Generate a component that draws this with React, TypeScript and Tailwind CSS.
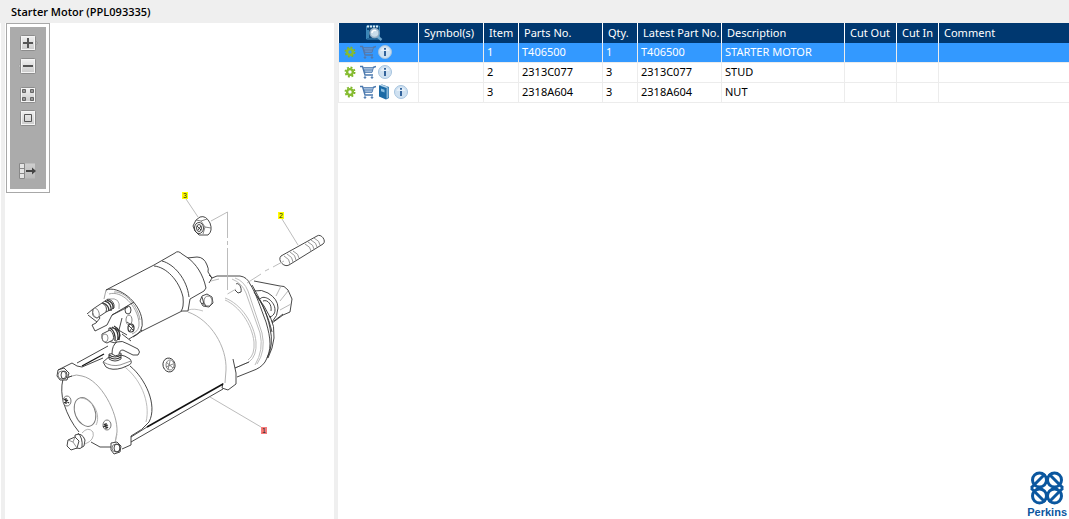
import { ReactNode } from "react";

type Part = {
  item: number;
  partNo: string;
  qty: number;
  description: string;
  hasManual?: boolean;
};

const parts: Part[] = [
  { item: 1, partNo: "T406500", qty: 1, description: "STARTER MOTOR" },
  { item: 2, partNo: "2313C077", qty: 3, description: "STUD" },
  { item: 3, partNo: "2318A604", qty: 3, description: "NUT", hasManual: true },
];

const columns = [
  { title: "Symbol(s)", width: "w-[65px]" },
  { title: "Item", width: "w-[35px]" },
  { title: "Parts No.", width: "w-[84px]" },
  { title: "Qty.", width: "w-[35px]" },
  { title: "Latest Part No.", width: "w-[84px]" },
  { title: "Description", width: "w-[123px]" },
  { title: "Cut Out", width: "w-[52px]" },
  { title: "Cut In", width: "w-[42px]" },
  { title: "Comment", width: "" },
];

function GearIcon() {
  return (
    <svg viewBox="0 0 12 12" className="size-3">
      <circle cx="6" cy="6" r="4.6" fill="none" stroke="#7fb52c" strokeWidth="1.8" strokeDasharray="1.9 1.71" />
      <circle cx="6" cy="6" r="2.9" fill="none" stroke="#86bc2f" strokeWidth="2.4" />
    </svg>
  );
}

function CartIcon({ dim }: { dim?: boolean }) {
  const stroke = dim ? "#5577a8" : "#4a78ae";
  return (
    <svg viewBox="0 0 16 14" className="h-3.5 w-4" fill="none" stroke={stroke}>
      <path d="M3.500 2.500H13.500L12 7.500H5Z" fill={dim ? "#5f9be0" : "#c3d6ec"} strokeWidth=".8" />
      <path d="M6 3V7M8 3V7M10 3V7M12 3V7M4.500 5H13" strokeWidth=".6" />
      <path d="M0 1.500H2.500L5 10H13M13 2.500L16 1.500" strokeWidth="1.400" />
      <circle cx="5" cy="12.500" r=".8" fill={stroke} />
      <circle cx="12" cy="12.500" r=".8" fill={stroke} />
    </svg>
  );
}

function InfoIcon() {
  return (
    <svg viewBox="0 0 14 14" className="size-3.5">
      <circle cx="7" cy="7" r="6.5" fill="#cfe1f1" stroke="#a5c3de" />
      <path d="M2.500 6A4.700 4.700 0 0 1 11.500 6Z" fill="#e6f0f9" />
      <path d="M7 3V4.800M7 6V11" stroke="#33639b" strokeWidth="2" />
    </svg>
  );
}

function BookIcon() {
  return (
    <svg viewBox="0 0 12 16" className="h-4 w-3">
      <path d="M1 1.500L4 .5L11 3V14L8 15.500L1 12.500Z" fill="#1b6aa5" />
      <path d="M1.500 1.500L4 .8L10.500 3L8.500 4Z" fill="#b7d5ea" />
      <path d="M8.500 4.300L10.500 3.300V13.500L8.500 14.800Z" fill="#84b4d6" />
      <path d="M3 4.500L6.500 5.800V8.500L3 7.300Z" fill="#8dc0e2" />
    </svg>
  );
}

function SearchSheetIcon() {
  return (
    <svg viewBox="0 0 17 16" className="h-4 w-[17px]">
      <path d="M.5 1H13.500V14H.5Z" fill="#0d4779" stroke="#3b87ba" />
      <path d="M1 1.500H13" stroke="#d9edf8" strokeWidth="2" strokeDasharray="2 1" />
      <path d="M2 5V13" stroke="#4d9bc9" strokeWidth="1.500" />
      <path d="M11.500 11.500L15.500 15" stroke="#70a9d0" strokeWidth="2.400" />
      <circle cx="8.500" cy="8" r="4.500" fill="#c9dcea" stroke="#93adc3" strokeWidth="1.400" />
      <path d="M6 8A2.700 2.700 0 0 1 10 5.700" fill="none" stroke="#fff" strokeWidth="1.400" />
    </svg>
  );
}

function ToolButton({ label, children }: { label: string; children: ReactNode }) {
  return (
    <button type="button" aria-label={label} title={label} className="block cursor-pointer">
      <svg viewBox="0 0 20 16" className="h-4 w-5">
        <defs>
          <linearGradient id="face" x1="0" y1="0" x2="0" y2="1">
            <stop offset="0" stopColor="#f2f2f2" />
            <stop offset="1" stopColor="#c9c9c9" />
          </linearGradient>
        </defs>
        {children}
      </svg>
    </button>
  );
}

const face = (
  <>
    <rect x="2.500" y=".5" width="15" height="15" rx="1" fill="url(#face)" stroke="#8c8c8c" />
    <rect x="3.500" y="1.500" width="13" height="13" fill="none" stroke="#f5f5f5" />
  </>
);

function Toolbar() {
  return (
    <div className="absolute top-0 left-px border border-[#a8a8a8] bg-white p-[3px]">
      <div className="flex h-[162px] w-9 flex-col items-center bg-[#ababab] pt-2">
        <div className="flex flex-col gap-[7px]">
          <ToolButton label="Zoom in">
            <path d="M17 5.500L19.500 8L17 10.500Z" fill="#d8d8d8" stroke="#888" />
            {face}
            <path d="M5 8H15M10 3V13" stroke="#555" strokeWidth="2" />
          </ToolButton>
          <ToolButton label="Zoom out">
            <path d="M3 5.500L.5 8L3 10.500Z" fill="#e8e8e8" stroke="#999" />
            {face}
            <path d="M5 8H15" stroke="#555" strokeWidth="2" />
          </ToolButton>
        </div>
        <div className="mt-[13px] flex flex-col gap-[7px]">
          <ToolButton label="Fit to window">
            {face}
            <path d="M4.500 2.500h3v3h-3zM12.500 2.500h3v3h-3zM4.500 10.500h3v3h-3zM12.500 10.500h3v3h-3z" fill="#999" stroke="#666" />
          </ToolButton>
          <ToolButton label="Actual size">
            {face}
            <path d="M6.500 4.500h7v7h-7z" fill="none" stroke="#555" />
          </ToolButton>
        </div>
        <div className="mt-[37px]">
          <ToolButton label="Hide list">
            <path d="M7 .5H17V15.500H7Z" fill="url(#face)" opacity=".5" />
            <path d="M1.500 .5h5v15h-5zM1.500 5.500h5M1.500 10.500h5" fill="#e5e5e5" stroke="#888" />
            <path d="M8 8H15" stroke="#444" strokeWidth="2" />
            <path d="M14 4.500L18 8L14 11.500Z" fill="#444" />
          </ToolButton>
        </div>
      </div>
    </div>
  );
}

function Hotspot({ x, y, label, fill }: { x: number; y: number; label: string; fill: string }) {
  return (
    <g>
      <rect x={x} y={y} width="6" height="7" fill={fill} />
      <text x={x + 3} y={y + 6} fontSize="7" textAnchor="middle" fill="#222" fontFamily="Liberation Sans, sans-serif">
        {label}
      </text>
    </g>
  );
}

function StarterDrawing() {
  return (
    <svg
      viewBox="5 23 329 496"
      preserveAspectRatio="xMinYMin meet"
      className="w-full"
      role="img"
      aria-label="Starter motor exploded view"
      fill="none"
      stroke="#333"
      strokeWidth=".9"
      strokeLinejoin="round"
    >
      {/* flange nut */}
      <path d="M200 217Q206 215 210 223Q213 231 208 235L199 235L195 231L193 226L196 220Z" fill="#fff" />
      <path d="M196 220L201 221L207 219M201 221L205 227L203 234M205 227L211 228" stroke="#777" />
      <ellipse cx="199" cy="228" rx="4.500" ry="5.500" />
      <ellipse cx="199" cy="228" rx="2.500" ry="3.500" />
      <path d="M197 226L201 230M198 230L201 226" />

      {/* stud */}
      <path d="M281 256L317 236C321 233 327 241 323 244L289 265C284 268 277 260 281 256Z" fill="#fff" />
      <g stroke="#8c8c8c">
        <path d="M284 256Q290 259 290 264M287 254Q293 257 293 262M290 252Q296 255 296 260M293 251Q299 254 299 258" />
        <path d="M305 244Q311 247 311 251M308 242Q314 245 314 249M311 240Q317 243 317 247M314 238Q320 241 320 245" />
      </g>

      {/* drive end nose and pinion */}
      <path d="M254 281L280 286Q284 285 288 290L292 299L290 312L283 315L272 323" fill="#fff" />
      <path d="M281 286L276 296M288 291L280 301M291 304L280 310" stroke="#b0b0b0" />
      <path d="M254 291Q262 289 268 293Q278 299 278 308Q278 316 272 322" fill="#fff" />
      <path d="M260 299C264 294 275 301 275 310C275 314 272 317 269 317M263 301C268 299 272 305 271 311M274 321L283 314" />
      <path d="M256 295Q265 306 270 317M270 316Q275 326 274 338Q273 348 268 358" />

      {/* mounting flange */}
      <path
        d="M209 275L212 278L217 276H240Q247 277 250 284C256 293 261 309 266 322C271 339 272 350 265 362Q261 368 252 371L237 377"
        fill="#fff"
      />
      <path d="M252 285C260 299 267 313 270 328Q274 345 267 358M254 292C263 304 268 316 272 332" />
      <g stroke="#b4b4b4">
        <path d="M211 281L219 279M235 278Q244 281 248 291L262 333Q266 351 257 364M232 279Q242 283 246 293L260 333Q264 350 255 365" />
        <path d="M225 298C241 304 254 323 256 342Q257 356 249 362L235 368M225 300C239 306 252 324 254 342Q255 355 248 360" />
      </g>
      <path d="M236 284C239 282 242 288 241 292L238 293L235 290M235 368L249 362" />

      {/* main housing */}
      <path d="M188 312C211 320 227 347 226 370L225 383" stroke="#a8a8a8" />
      <path d="M188 310Q194 308 203 311" stroke="#bcbcbc" />
      <path d="M233 359L236 373V384L228 390L222 388L223 383" />
      <path d="M147 427L200 397L223 384" stroke="#111" strokeWidth="1.500" />
      <path d="M131 437L147 427M131 442L223 389" />
      <ellipse cx="169" cy="365" rx="6" ry="7" transform="rotate(-15 169 365)" />
      <ellipse cx="170" cy="365" rx="4" ry="5" stroke="#777" />
      <path d="M166 362L173 368M170 361L168 370M166 367L173 364" stroke="#777" />
      <path d="M202 296L207 294L212 297L213 303L209 307L203 306L200 301Z" fill="#fff" />
      <ellipse cx="208" cy="301" rx="4" ry="5" stroke="#777" />
      <path d="M202 297L204 304M202 303L206 306" />

      {/* solenoid body */}
      <path
        d="M187 258L197 257Q204 257 207 265Q209 269 208 272L212 278L209 283"
      />
      <path
        d="M106 290L154 265L175 253Q178 250 182 254L188 258C196 264 203 274 206 288L204 291L190 299L188 311H182L142 331Z"
        fill="#fff"
      />
      <path d="M154 266C166 267 179 280 183 297Q184 308 181 311M162 261C174 264 187 279 189 297" />
      <path d="M106 290C118 285 140 302 142 320Q144 332 133 337" fill="#fff" />
      <g stroke="#999">
        <path d="M109 294C122 290 137 306 139 322Q140 331 132 334M114 292C125 291 138 306 140 320" />
        <path d="M109 299Q121 297 119 309M106 290L104 299" />
      </g>
      {/* terminal block */}
      <path d="M87 314L93 309L100 318L96 323L92 325L95 331L107 325L112 315L128 307" />
      <path d="M88 315L97 322M112 315L134 302M115 328L127 335M127 322L134 327M122 318L119 330" />
      <path d="M102 303L108 299Q115 301 114 308L106 312Z" fill="#fff" />
      <path d="M105 301Q112 303 111 311M107 300Q114 302 113 309M103 303Q109 305 109 311" strokeWidth="1.300" />
      <path d="M93 309L102 303Q108 306 106 312L97 318Q91 317 93 309Z" fill="#fff" />
      <ellipse cx="96" cy="313" rx="3" ry="5" transform="rotate(-20 96 313)" stroke="#888" />
      <ellipse cx="128" cy="310" rx="3" ry="4" />
      <ellipse cx="129" cy="320" rx="3" ry="5" stroke="#777" />
      <ellipse cx="131" cy="328" rx="3" ry="4" strokeWidth="1.200" />
      <path d="M129 326L133 330M133 326L130 331" />
      <path d="M109 328Q119 327 120 336L115 343L108 341Z" fill="#fff" />
      <path d="M112 327Q119 330 118 340M114 326Q122 330 119 340M110 328Q116 332 115 341" strokeWidth="1.300" />
      <path d="M102 334L110 330Q115 335 113 340L107 343Q101 342 102 334Z" fill="#fff" />
      <ellipse cx="105" cy="338" rx="3" ry="4" stroke="#888" />
      <path d="M122 334L131 341M129 339L142 331" />

      {/* end cap */}
      <path d="M58 370L72 363L77 366L82 367L103 358M77 363L108 346" />
      <path d="M82 366L104 354" stroke="#111" strokeWidth="1.300" />
      <path d="M63 379L72 376Q76 374 82 376C101 380 118 413 117 432L115 443" stroke="#999" />
      <path d="M63 379Q60 391 64 404Q69 420 79 432M91 442L100 447H112M63 379L72 376" />
      <path d="M130 366C145 378 158 405 149 422Q143 430 131 436V445L122 449" />
      <path d="M122 365C140 377 151 402 146 422M115 443L117 434" stroke="#b4b4b4" />
      <ellipse cx="85" cy="412" rx="10" ry="15" transform="rotate(-22 85 412)" stroke="#777" />
      <path d="M81 398C94 399 101 416 96 425" stroke="#aaa" />
      <ellipse cx="67" cy="401" rx="4" ry="5" fill="#fff" stroke="#666" />
      <path d="M64 399L69 403M66 398L66 404M64 403L68 400" strokeWidth="1.300" />
      <ellipse cx="107" cy="425" rx="4" ry="5" fill="#fff" stroke="#666" />
      <path d="M104 424L108 428M106 423V429M103 427L108 425" strokeWidth="1.300" />
      <path d="M58 370L64 368L69 373L67 380L60 380L57 376Z" fill="#fff" />
      <ellipse cx="62" cy="375" rx="4" ry="4" stroke="#777" />
      <ellipse cx="64" cy="375" rx="3" ry="4" />
      <path d="M111 443L117 442L121 446L120 452L114 454L111 450Z" fill="#fff" />
      <ellipse cx="116" cy="448" rx="4" ry="4" stroke="#777" />
      <ellipse cx="117" cy="448" rx="3" ry="4" />
      <path d="M82 433Q88 426 93 432Q95 440 85 444" stroke="#aaa" />
      <path d="M75 435Q82 432 85 440L84 446Q80 450 76 448Z" fill="#fff" />
      <path d="M78 433Q83 438 82 447" />
      <path d="M68 440L75 437L79 441L77 448L71 450L67 446Z" fill="#fff" />
      <path d="M75 437L73 442L77 448M68 440L73 442" stroke="#888" />

      {/* cable elbow */}
      <path d="M103 362L110 356Q120 352 130 359Q133 363 129 365L122 368Q112 371 106 367Z" fill="#fff" />
      <path d="M103 362Q112 367 120 365L131 361" stroke="#888" />
      <path d="M109 354V359Q115 363 121 359V353Z" fill="#fff" />
      <path d="M109 355Q115 359 121 355M109 357Q115 361 121 357" strokeWidth="1.200" />
      <path
        d="M112 354Q112 345 117 342Q122 340 128 344L138 349Q141 352 138 355L133 355L123 350Q119 350 119 355Q115 357 112 354Z"
        fill="#fff"
      />

      {/* leaders and centre lines */}
      <g stroke="#b4b4b4">
        <path d="M186 199L198 217M282 219L298 245M210 397L261 427" />
        <path d="M211 221L227.500 212V238M227.500 241V245M227.500 248V290M227.500 294L236 289" />
        <path d="M284 261L273 267M269 269L265 271M261 274L247 283" />
      </g>

      <g stroke="none">
        <Hotspot x={182} y={192} label="3" fill="#ffff00" />
        <Hotspot x={278} y={212} label="2" fill="#ffff00" />
        <Hotspot x={261} y={427} label="1" fill="#f77b7b" />
      </g>
    </svg>
  );
}

function PerkinsLogo() {
  return (
    <div className="flex flex-col items-center text-[#0b579f]">
      <svg viewBox="0 0 34 34" className="size-[34px]" fill="none" stroke="currentColor" strokeWidth="3">
        <circle cx="9.500" cy="9" r="7" />
        <circle cx="24.500" cy="9" r="7" />
        <circle cx="9.500" cy="25" r="7" />
        <circle cx="24.500" cy="25" r="7" />
        <path d="M1 17L15 3M19 3L33 17M1 17L15 31M19 31L33 17" />
      </svg>
      <span className="font-['Liberation_Sans',sans-serif] text-[11px] leading-[14px] font-bold">Perkins</span>
    </div>
  );
}

export default function App() {
  return (
    <div className="flex min-h-screen flex-col bg-white font-['Noto_Sans',sans-serif] text-[11px] text-black">
      <header className="h-[23px] bg-[#efefef] pt-1 pl-[11px]">
        <h1 className="font-['Open_Sans',sans-serif] leading-4 font-semibold">Starter Motor (PPL093335)</h1>
      </header>
      <main className="flex grow">
        <section className="ml-px w-[337px] shrink-0 border-r-4 border-l-4 border-[#efefef]">
          <div className="relative">
            <StarterDrawing />
            <Toolbar />
          </div>
        </section>
        <section className="flex min-w-0 grow flex-col">
          <table className="w-full table-fixed border-separate border-spacing-0 text-left whitespace-nowrap">
            <thead>
              <tr className="h-5 bg-[#003870] text-white">
                <th className="w-[81px] border-r border-l border-white p-0">
                  <div className="flex justify-center pr-2" title="Search">
                    <SearchSheetIcon />
                  </div>
                </th>
                {columns.map((column) => (
                  <th
                    key={column.title}
                    className={`${column.width} border-r border-white p-0 pl-[5px] leading-4 font-normal last:border-r-0`}
                  >
                    {column.title}
                  </th>
                ))}
              </tr>
            </thead>
            <tbody>
              {parts.map((part, i) => {
                const selected = i === 0;
                const cells = ["", part.item, part.partNo, part.qty, part.partNo, part.description, "", "", ""];
                return (
                  <tr key={part.item} className={selected ? "h-5 bg-[#3399ff] text-white" : "h-5"}>
                    <td className="border-r border-b border-l border-[#ececec] p-0 pl-[5px] align-top">
                      <div className="flex h-[18px] items-center gap-0.5">
                        <button type="button" aria-label="Options" className="mr-0.5">
                          <GearIcon />
                        </button>
                        <button type="button" aria-label="Add to cart">
                          <CartIcon dim={selected} />
                        </button>
                        {part.hasManual && (
                          <button type="button" aria-label="Manual" className="mr-0.5">
                            <BookIcon />
                          </button>
                        )}
                        <button type="button" aria-label="Information">
                          <InfoIcon />
                        </button>
                      </div>
                    </td>
                    {cells.map((cell, j) => (
                      <td
                        key={j}
                        className="border-r border-b border-[#ececec] p-0 pl-[3px] align-top leading-[18px] last:border-r-0"
                      >
                        {cell}
                      </td>
                    ))}
                  </tr>
                );
              })}
            </tbody>
          </table>
          <div className="mt-auto self-end pr-0.5">
            <PerkinsLogo />
          </div>
        </section>
      </main>
    </div>
  );
}
